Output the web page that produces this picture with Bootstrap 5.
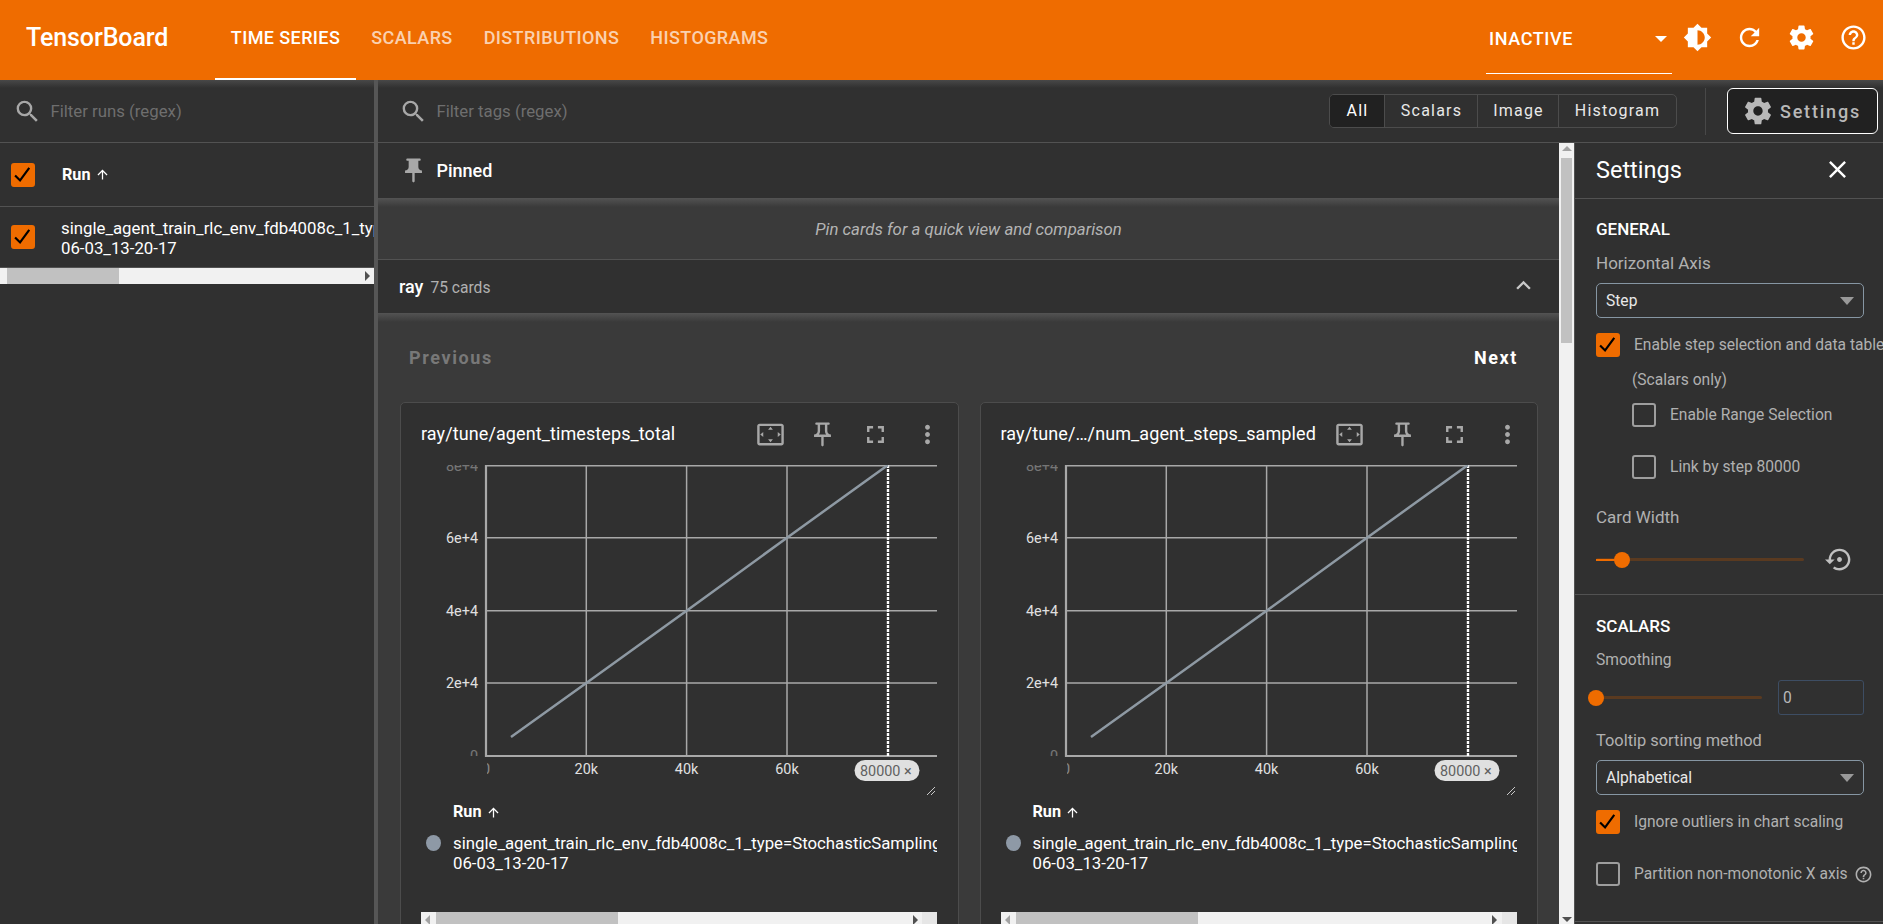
<!DOCTYPE html>
<html lang="en">
<head>
<meta charset="utf-8">
<title>TensorBoard</title>
<link href="https://cdn.jsdelivr.net/npm/bootstrap@5.3.0/dist/css/bootstrap.min.css" rel="stylesheet">
<style>
html,body{height:924px;overflow:hidden;background:#303030;font-family:Roboto,"Liberation Sans",sans-serif;color:#fff;font-size:16.8px;line-height:20px}
svg.ico{fill:currentColor;display:block;flex:none}
.tb-head{height:80px;background:#ef6c00;padding:0;flex-wrap:nowrap;align-items:stretch}
.tb-brand{font-size:25px;font-weight:500;color:#fff;margin:0 47px 0 26px;padding:0;line-height:76px;letter-spacing:-.1px}
.tb-tab.nav-link{height:80px;padding:0 15.5px;line-height:76px;font-weight:500;font-size:18px;color:rgba(255,255,255,.7);letter-spacing:.4px;border-bottom:2px solid transparent}
.tb-tab.nav-link.active{color:#fff;border-bottom-color:#fff}
.tb-inactive{width:186px;height:74px;margin-right:-1px;border-bottom:1px solid #fff;padding:0 5px 0 3px;line-height:78px;font-weight:500;font-size:18px;letter-spacing:.6px}
.tb-caret{width:0;height:0;border-left:6px solid transparent;border-right:6px solid transparent;border-top:6px solid #fff;margin-top:36px}
.tb-act{width:52px;height:80px;padding-bottom:6px;color:#fff}
.tb-actions{margin-right:4px}
.tb-body{height:844px}
.tb-side{width:378px;flex:none;border-right:4px solid #565656}
.tb-filter{height:63px;flex:none;border-bottom:1px solid #525252;background:linear-gradient(#484848,#303030 8px)}
.tb-ph{color:#6e6e6e;white-space:nowrap}
.tb-ico-g{color:#a8a8a8}
.tb-runhead{height:64px;border-bottom:1px solid #525252;padding-left:11px}
.tb-runrow{height:61px;padding-left:11px;border-bottom:1px solid #525252;overflow:hidden;white-space:nowrap;font-size:16.8px}
.form-check-input.tb-cb{width:24px;height:24px;margin:0;flex:none;background-color:transparent;border:2px solid #9e9e9e;border-radius:3px;box-shadow:none}
.form-check-input.tb-cb[type=checkbox]:checked{background-color:#ef6c00;border-color:#ef6c00;background-size:100%;background-image:url("data:image/svg+xml,%3Csvg xmlns='http://www.w3.org/2000/svg' viewBox='0 0 24 24'%3E%3Cpath fill='none' stroke='%23000' stroke-width='2.6' d='M2.5 12.5l6 6L19.5 3.5'/%3E%3C/svg%3E")}
.tb-hbar{height:16px;background:#f1f1f1;position:relative;flex:none}
.tb-hthumb{background:#c1c1c1;height:100%}
.tb-arr-r,.tb-arr-l{width:0;height:0;border-top:5px solid transparent;border-bottom:5px solid transparent;flex:none}
.tb-arr-r{border-left:5px solid #505050}
.tb-arr-l{border-right:5px solid #a3a3a3}
.tb-main{min-width:0}
.tb-tog.btn-group{height:34px;border:1px solid #4c4c4c;border-radius:5px;overflow:hidden}
.tb-tog .btn{border:0;border-left:1px solid #4c4c4c;border-radius:0;background:transparent;color:#e8e8e8;padding:0;font-size:16px;letter-spacing:1.2px;line-height:32px;flex:none}
.tb-tog .btn:first-child{border-left:0;background:#212121;color:#fff}
.tb-vr{width:1px;height:47px;background:#484848;margin:0 21px 0 28px}
.tb-setbtn.btn{width:151px;height:46px;background:#212121;border:1px solid #fff;border-radius:6px;color:#b8b8b8;font-weight:500;font-size:18px;letter-spacing:1.8px;padding:0 2px 0 0;margin-right:5px}
.tb-setgap{gap:6px}
.tb-pinned{height:56px;border-bottom:1px solid #525252;padding-left:24px;font-weight:500;font-size:18px}
.tb-hint{height:61px;border-bottom:1px solid #525252;background:linear-gradient(#505050,#3a3a3a 8px);font-style:italic;color:#b4b4b4;font-size:16.8px}
.tb-group{height:54px;border-bottom:1px solid #525252;padding:0 21px 0 21px}
.tb-group75{color:#b0b0b0;font-size:15.6px;margin:2px 0 0 7px}
.tb-area{background:linear-gradient(#505050,#3a3a3a 8px)}
.tb-pager{height:88px;padding:0 41px 0 31px;font-weight:700;font-size:18px;letter-spacing:1.6px}
.tb-grid{display:grid;grid-template-columns:1fr 1fr;gap:21px;padding:0 21px 0 22px}
.tb-pcard{height:560px;background:#303030;border:1px solid #4c4c4c;border-radius:5px;padding:0 21px 0 20px;overflow:hidden}
.tb-chead{height:62px;white-space:nowrap;font-size:18px;letter-spacing:.1px}
.tb-cicons{width:187px;margin-left:auto;margin-right:-6px}
.tb-chart{display:block;width:516px;height:330px}
.tb-chart text{font-family:Roboto,"Liberation Sans",sans-serif;font-size:14.4px;fill:#e0e0e0}
.tb-dt{width:516px;overflow:hidden;font-size:16.8px}
.tb-runlbl{margin:7px 0 11px 32px;font-weight:700;font-size:16.2px}
.tb-dot{width:15px;height:16px;border-radius:50%;background:#8e99a6;margin:2px 12px 0 5px;flex:none}
.tb-vtext{white-space:nowrap}
.tb-cbar{margin-top:39px;height:16px;width:516px}
.tb-corner{width:15px;height:100%;background:#e6e6e6;flex:none}
.tb-vbar{width:15px;flex:none;background:#f1f1f1;padding:3px 2px 0}
.tb-arr-u{width:0;height:0;border-left:5px solid transparent;border-right:5px solid transparent;border-bottom:5px solid #a3a3a3;margin:0 auto}
.tb-arr-d{width:0;height:0;border-left:5px solid transparent;border-right:5px solid transparent;border-top:5px solid #505050;margin:0 auto 2px}
.tb-vthumb{width:11px;height:185px;background:#c1c1c1;margin-top:7px}
.tb-panel{width:309px;flex:none;border-left:1px solid #525252;overflow:hidden;white-space:nowrap;color:#b0b0b0;font-size:15.6px}
.tb-ptitle{height:56px;border-bottom:1px solid #525252;padding:0 31px 2px 21px;color:#fff;font-size:23.5px}
.tb-sect{border-bottom:1px solid #525252;padding:0 0 0 21px}
.tb-h6{color:#fff;font-weight:500;font-size:17px;line-height:20px}
.tb-big{font-size:17px}
.form-select.tb-sel{width:268px;height:35px;background-color:transparent;border:1px solid #8696a3;border-radius:5px;color:#e8e8e8;font-size:15.6px;padding:2px 0 0 9px;box-shadow:none;background-size:16px 8px;background-position:right 8px center;background-image:url("data:image/svg+xml,%3Csvg xmlns='http://www.w3.org/2000/svg' viewBox='0 0 16 8'%3E%3Cpath fill='%23999' d='M1 0h14L8 8z'/%3E%3C/svg%3E")}
.form-control.tb-num{width:86px;height:35px;background:transparent;border:1px solid #3d4d63;border-radius:3px;color:#b8b8b8;padding:0 0 0 4px;font-size:15.6px;box-shadow:none}
.tb-track{height:20px;position:relative}
.tb-rail{position:absolute;left:0;right:0;top:8.5px;height:3px;background:#5a3a20;border-radius:2px}
.tb-fill{position:absolute;left:0;top:9px;height:2px;background:#ef6c00}
.tb-thumb{position:absolute;top:2px;width:16px;height:16px;border-radius:50%;background:#ef6c00}
.tb-lab{margin-left:14px;line-height:20px}
</style>
</head>
<body>
<svg width="0" height="0" class="position-absolute">
<symbol id="i-search" viewBox="0 0 24 24"><path d="M15.5 14h-.79l-.28-.27A6.471 6.471 0 0 0 16 9.5 6.5 6.5 0 1 0 9.5 16c1.61 0 3.09-.59 4.23-1.57l.27.28v.79l5 4.99L20.49 19l-4.99-5zm-6 0C7.01 14 5 11.99 5 9.5S7.01 5 9.5 5 14 7.01 14 9.5 11.99 14 9.5 14z"/></symbol>
<symbol id="i-bright" viewBox="0 0 24 24"><path d="M20 15.31L23.31 12 20 8.69V4h-4.69L12 .69 8.69 4H4v4.69L.69 12 4 15.31V20h4.69L12 23.31 15.31 20H20v-4.69zM12 18V6c3.31 0 6 2.69 6 6s-2.69 6-6 6z"/></symbol>
<symbol id="i-refresh" viewBox="0 0 24 24"><path d="M17.65 6.35C16.2 4.9 14.21 4 12 4c-4.42 0-7.99 3.58-7.99 8s3.57 8 7.99 8c3.73 0 6.84-2.55 7.73-6h-2.08c-.82 2.33-3.04 4-5.65 4-3.31 0-6-2.69-6-6s2.69-6 6-6c1.66 0 3.14.69 4.22 1.78L13 11h7V4l-2.35 2.35z"/></symbol>
<symbol id="i-gear" viewBox="0 0 24 24"><path d="M19.43 12.98c.04-.32.07-.64.07-.98s-.03-.66-.07-.98l2.11-1.65c.19-.15.24-.42.12-.64l-2-3.46c-.12-.22-.39-.3-.61-.22l-2.49 1c-.52-.4-1.08-.73-1.69-.98l-.38-2.65C14.46 2.18 14.25 2 14 2h-4c-.25 0-.46.18-.49.42l-.38 2.65c-.61.25-1.17.59-1.69.98l-2.49-1c-.23-.09-.49 0-.61.22l-2 3.46c-.13.22-.07.49.12.64l2.11 1.65c-.04.32-.07.65-.07.98s.03.66.07.98l-2.11 1.65c-.19.15-.24.42-.12.64l2 3.46c.12.22.39.3.61.22l2.49-1c.52.4 1.08.73 1.69.98l.38 2.65c.03.24.24.42.49.42h4c.25 0 .46-.18.49-.42l.38-2.65c.61-.25 1.17-.59 1.69-.98l2.49 1c.23.09.49 0 .61-.22l2-3.46c.12-.22.07-.49-.12-.64l-2.11-1.65zM12 15.5c-1.93 0-3.5-1.57-3.5-3.5s1.57-3.5 3.5-3.5 3.5 1.57 3.5 3.5-1.57 3.5-3.5 3.5z"/></symbol>
<symbol id="i-help" viewBox="0 0 24 24"><path d="M11 18h2v-2h-2v2zm1-16C6.48 2 2 6.48 2 12s4.48 10 10 10 10-4.48 10-10S17.52 2 12 2zm0 18c-4.41 0-8-3.59-8-8s3.59-8 8-8 8 3.59 8 8-3.59 8-8 8zm0-14c-2.21 0-4 1.79-4 4h2c0-1.1.9-2 2-2s2 .9 2 2c0 2-3 1.75-3 5h2c0-2.25 3-2.5 3-5 0-2.21-1.79-4-4-4z"/></symbol>
<symbol id="i-pinf" viewBox="0 0 24 24"><path d="M16 9V4h1c.55 0 1-.45 1-1s-.45-1-1-1H7c-.55 0-1 .45-1 1s.45 1 1 1h1v5c0 1.66-1.34 3-3 3v2h5.97v7l1 1 1-1v-7H19v-2c-1.66 0-3-1.34-3-3z"/></symbol>
<symbol id="i-pino" viewBox="0 0 24 24"><path d="M14 4v5c0 1.12.37 2.16 1 3H9c.65-.86 1-1.9 1-3V4h4m3-2H7c-.55 0-1 .45-1 1s.45 1 1 1h1v5c0 1.66-1.34 3-3 3v2h5.97v7l1 1 1-1v-7H19v-2c-1.66 0-3-1.34-3-3V4h1c.55 0 1-.45 1-1s-.45-1-1-1z"/></symbol>
<symbol id="i-full" viewBox="0 0 24 24"><path d="M7 14H5v5h5v-2H7v-3zm-2-4h2V7h3V5H5v5zm12 7h-3v2h5v-5h-2v3zM14 5v2h3v3h2V5h-5z"/></symbol>
<symbol id="i-more" viewBox="0 0 24 24"><path d="M12 8c1.1 0 2-.9 2-2s-.9-2-2-2-2 .9-2 2 .9 2 2 2zm0 2c-1.1 0-2 .9-2 2s.9 2 2 2 2-.9 2-2-.9-2-2-2zm0 6c-1.1 0-2 .9-2 2s.9 2 2 2 2-.9 2-2-.9-2-2-2z"/></symbol>
<symbol id="i-fit" viewBox="0 0 24 24"><path d="M12.01 5.5L10 8h4l-1.99-2.5zM18 10v4l2.5-1.99L18 10zM6 10l-2.5 2.01L6 14v-4zm8 6h-4l2.01 2.5L14 16zm7-13H3c-1.1 0-2 .9-2 2v14c0 1.1.9 2 2 2h18c1.1 0 2-.9 2-2V5c0-1.1-.9-2-2-2zm0 16.01H3V4.99h18v14.02z"/></symbol>
<symbol id="i-close" viewBox="0 0 24 24"><path d="M19 6.41L17.59 5 12 10.59 6.41 5 5 6.41 10.59 12 5 17.59 6.41 19 12 13.41 17.59 19 19 17.59 13.41 12z"/></symbol>
<symbol id="i-less" viewBox="0 0 24 24"><path d="M12 8l-6 6 1.41 1.41L12 10.83l4.59 4.58L18 14z"/></symbol>
<symbol id="i-reset" viewBox="0 0 24 24"><path d="M14 12c0-1.1-.9-2-2-2s-2 .9-2 2 .9 2 2 2 2-.9 2-2zm-2-9c-4.97 0-9 4.03-9 9H0l4 4 4-4H5c0-3.87 3.13-7 7-7s7 3.13 7 7-3.13 7-7 7c-1.51 0-2.91-.49-4.06-1.3l-1.42 1.44C8.04 20.3 9.94 21 12 21c4.97 0 9-4.03 9-9s-4.03-9-9-9z"/></symbol>
<symbol id="i-up" viewBox="0 0 24 24"><path d="M4 12l1.41 1.41L11 7.83V20h2V7.83l5.58 5.59L20 12l-8-8-8 8z"/></symbol>
<clipPath id="clip-y"><rect x="0" y="0" width="64" height="291"/></clipPath>
<clipPath id="clip-x"><rect x="66" y="292" width="40" height="30"/></clipPath>
</svg>

<nav class="navbar tb-head">
  <span class="navbar-brand tb-brand">TensorBoard</span>
  <ul class="nav flex-nowrap">
    <li class="nav-item"><a class="nav-link tb-tab active" href="#">TIME SERIES</a></li>
    <li class="nav-item"><a class="nav-link tb-tab" href="#">SCALARS</a></li>
    <li class="nav-item"><a class="nav-link tb-tab" href="#">DISTRIBUTIONS</a></li>
    <li class="nav-item"><a class="nav-link tb-tab" href="#">HISTOGRAMS</a></li>
  </ul>
  <div class="d-flex ms-auto tb-actions">
    <div class="tb-inactive d-flex justify-content-between"><span>INACTIVE</span><span class="tb-caret"></span></div>
    <div class="tb-act d-flex align-items-center justify-content-center"><svg class="ico" width="29" height="29"><use href="#i-bright"/></svg></div>
    <div class="tb-act d-flex align-items-center justify-content-center"><svg class="ico" width="29" height="29"><use href="#i-refresh"/></svg></div>
    <div class="tb-act d-flex align-items-center justify-content-center"><svg class="ico" width="29" height="29"><use href="#i-gear"/></svg></div>
    <div class="tb-act d-flex align-items-center justify-content-center"><svg class="ico" width="29" height="29"><use href="#i-help"/></svg></div>
  </div>
</nav>

<div class="tb-body d-flex">
  <aside class="tb-side d-flex flex-column">
    <div class="tb-filter d-flex align-items-center gap-2" style="padding-left:13px"><svg class="ico tb-ico-g" width="29" height="29"><use href="#i-search"/></svg><span class="tb-ph">Filter runs (regex)</span></div>
    <div class="tb-runhead d-flex align-items-center"><input class="form-check-input tb-cb" type="checkbox" checked><b class="d-flex align-items-center" style="font-size:16.2px;margin-left:27px">Run <svg class="ico ms-1" width="15" height="15"><use href="#i-up"/></svg></b></div>
    <div class="tb-runrow d-flex align-items-center"><input class="form-check-input tb-cb" type="checkbox" checked><div class="tb-vtext" style="margin:2px 0 0 26px">single_agent_train_rlc_env_fdb4008c_1_type=StochasticSampling<br>06-03_13-20-17</div></div>
    <div class="tb-hbar d-flex align-items-center"><div class="tb-hthumb" style="width:112px;margin-left:7px"></div><span class="tb-arr-r ms-auto me-1"></span></div>
  </aside>

  <div class="tb-main flex-grow-1 d-flex flex-column">
    <div class="tb-filter d-flex align-items-center">
      <div class="d-flex align-items-center gap-2 flex-grow-1" style="padding-left:21px"><svg class="ico tb-ico-g" width="29" height="29"><use href="#i-search"/></svg><span class="tb-ph">Filter tags (regex)</span></div>
      <div class="btn-group tb-tog"><button class="btn" style="width:55px">All</button><button class="btn" style="width:94px">Scalars</button><button class="btn" style="width:82px">Image</button><button class="btn" style="width:118px">Histogram</button></div>
      <div class="tb-vr"></div>
      <button class="btn tb-setbtn d-flex align-items-center justify-content-center tb-setgap"><svg class="ico" width="32" height="32"><use href="#i-gear"/></svg>Settings</button>
    </div>
    <div class="d-flex flex-grow-1" style="min-height:0">
      <div class="flex-grow-1" style="min-width:0;overflow:hidden">
        <div class="tb-pinned d-flex align-items-center"><svg class="ico tb-ico-g me-2" style="margin-left:-3px" width="29" height="29"><use href="#i-pinf"/></svg><span>Pinned</span></div>
        <div class="tb-hint d-flex align-items-center justify-content-center">Pin cards for a quick view and comparison</div>
        <div class="tb-group d-flex align-items-center"><span style="font-weight:500;font-size:18px">ray</span><span class="tb-group75">75 cards</span><svg class="ico ms-auto" style="color:#c8c8c8;margin-bottom:2px" width="29" height="29"><use href="#i-less"/></svg></div>
        <div class="tb-area">
          <div class="tb-pager d-flex align-items-center justify-content-between"><span style="color:#787878">Previous</span><span>Next</span></div>
          <div class="tb-grid">

            <div class="tb-pcard">
              <div class="tb-chead d-flex align-items-center"><span>ray/tune/agent_timesteps_total</span>
                <div class="tb-cicons d-flex justify-content-between tb-ico-g align-items-center"><svg class="ico" width="29" height="29"><use href="#i-fit"/></svg><svg class="ico" width="29" height="29"><use href="#i-pino"/></svg><svg class="ico" width="29" height="29"><use href="#i-full"/></svg><svg class="ico" width="29" height="29"><use href="#i-more"/></svg></div>
              </div>
              <svg class="tb-chart" viewBox="0 0 516 330">
                <g stroke="#a8a8a8" stroke-width="1.5"><path d="M65 72.7H516M65 145.7H516M65 218H516M65 .75H516" fill="none"/><path d="M165.3 0V291M265.6 0V291M366 0V291"/></g>
                <path d="M65 0V292M65 291H516" stroke="#a8a8a8" stroke-width="2.2" fill="none"/>
                <path d="M467 0V291" stroke="#fff" stroke-width="2.4" stroke-dasharray="3 1"/>
                <path d="M90 272L165.3 218 265.6 145.7 366 72.7 467 0" stroke="#8e99a3" stroke-width="2.5" fill="none"/>
                <text x="57" y="6" text-anchor="end" opacity=".4" clip-path="url(#clip-y)">8e+4</text>
                <text x="57" y="78" text-anchor="end">6e+4</text><text x="57" y="151" text-anchor="end">4e+4</text><text x="57" y="223" text-anchor="end">2e+4</text>
                <text x="57" y="296" text-anchor="end" opacity=".4" clip-path="url(#clip-y)">0</text>
                <text x="65" y="309" text-anchor="middle" opacity=".5" clip-path="url(#clip-x)">0</text>
                <text x="165.3" y="309" text-anchor="middle">20k</text><text x="265.6" y="309" text-anchor="middle">40k</text><text x="366" y="309" text-anchor="middle">60k</text>
                <rect x="433.5" y="295" width="65" height="21" rx="10.5" fill="#e0e0e0"/>
                <text x="439" y="310.5" style="fill:#616161">80000 ×</text>
                <path d="M506 330l8-8M510 330l4-4" stroke="#c8c8c8" stroke-width="1"/>
              </svg>
              <div class="tb-dt">
                <div class="tb-runlbl d-flex align-items-center">Run <svg class="ico ms-1" width="15" height="15"><use href="#i-up"/></svg></div>
                <div class="d-flex"><span class="tb-dot"></span><div class="tb-vtext">single_agent_train_rlc_env_fdb4008c_1_type=StochasticSampling<br>06-03_13-20-17</div></div>
                <div class="tb-hbar tb-cbar d-flex align-items-center"><span class="tb-arr-l ms-1"></span><div class="tb-hthumb" style="width:182px;margin-left:6px"></div><span class="tb-arr-r ms-auto me-1"></span><span class="tb-corner"></span></div>
              </div>
            </div>

            <div class="tb-pcard">
              <div class="tb-chead d-flex align-items-center"><span>ray/tune/…/num_agent_steps_sampled</span>
                <div class="tb-cicons d-flex justify-content-between tb-ico-g align-items-center"><svg class="ico" width="29" height="29"><use href="#i-fit"/></svg><svg class="ico" width="29" height="29"><use href="#i-pino"/></svg><svg class="ico" width="29" height="29"><use href="#i-full"/></svg><svg class="ico" width="29" height="29"><use href="#i-more"/></svg></div>
              </div>
              <svg class="tb-chart" viewBox="0 0 516 330">
                <g stroke="#a8a8a8" stroke-width="1.5"><path d="M65 72.7H516M65 145.7H516M65 218H516M65 .75H516" fill="none"/><path d="M165.3 0V291M265.6 0V291M366 0V291"/></g>
                <path d="M65 0V292M65 291H516" stroke="#a8a8a8" stroke-width="2.2" fill="none"/>
                <path d="M467 0V291" stroke="#fff" stroke-width="2.4" stroke-dasharray="3 1"/>
                <path d="M90 272L165.3 218 265.6 145.7 366 72.7 467 0" stroke="#8e99a3" stroke-width="2.5" fill="none"/>
                <text x="57" y="6" text-anchor="end" opacity=".4" clip-path="url(#clip-y)">8e+4</text>
                <text x="57" y="78" text-anchor="end">6e+4</text><text x="57" y="151" text-anchor="end">4e+4</text><text x="57" y="223" text-anchor="end">2e+4</text>
                <text x="57" y="296" text-anchor="end" opacity=".4" clip-path="url(#clip-y)">0</text>
                <text x="65" y="309" text-anchor="middle" opacity=".5" clip-path="url(#clip-x)">0</text>
                <text x="165.3" y="309" text-anchor="middle">20k</text><text x="265.6" y="309" text-anchor="middle">40k</text><text x="366" y="309" text-anchor="middle">60k</text>
                <rect x="433.5" y="295" width="65" height="21" rx="10.5" fill="#e0e0e0"/>
                <text x="439" y="310.5" style="fill:#616161">80000 ×</text>
                <path d="M506 330l8-8M510 330l4-4" stroke="#c8c8c8" stroke-width="1"/>
              </svg>
              <div class="tb-dt">
                <div class="tb-runlbl d-flex align-items-center">Run <svg class="ico ms-1" width="15" height="15"><use href="#i-up"/></svg></div>
                <div class="d-flex"><span class="tb-dot"></span><div class="tb-vtext">single_agent_train_rlc_env_fdb4008c_1_type=StochasticSampling<br>06-03_13-20-17</div></div>
                <div class="tb-hbar tb-cbar d-flex align-items-center"><span class="tb-arr-l ms-1"></span><div class="tb-hthumb" style="width:182px;margin-left:6px"></div><span class="tb-arr-r ms-auto me-1"></span><span class="tb-corner"></span></div>
              </div>
            </div>

          </div>
        </div>
      </div>

      <div class="tb-vbar d-flex flex-column"><span class="tb-arr-u"></span><div class="tb-vthumb"></div><span class="tb-arr-d mt-auto"></span></div>

      <div class="tb-panel">
        <div class="tb-ptitle d-flex align-items-center justify-content-between"><span>Settings</span><svg class="ico" width="29" height="29"><use href="#i-close"/></svg></div>
        <div class="tb-sect" style="height:396px;padding-top:20px">
          <div class="tb-h6">GENERAL</div>
          <div class="tb-big" style="margin-top:14px">Horizontal Axis</div>
          <select class="form-select tb-sel" style="margin-top:10px"><option>Step</option></select>
          <div class="d-flex align-items-center" style="margin-top:15px"><input class="form-check-input tb-cb" type="checkbox" checked><span class="tb-lab">Enable step selection and data table</span></div>
          <div style="margin:13px 0 -1px 36px">(Scalars only)</div>
          <div class="d-flex align-items-center" style="margin:14px 0 0 36px"><input class="form-check-input tb-cb" type="checkbox"><span class="tb-lab">Enable Range Selection</span></div>
          <div class="d-flex align-items-center" style="margin:28px 0 0 36px"><input class="form-check-input tb-cb" type="checkbox"><span class="tb-lab">Link by step 80000</span></div>
          <div class="tb-big" style="margin-top:28px">Card Width</div>
          <div class="d-flex align-items-center" style="margin-top:18px">
            <div class="tb-track" style="width:208px"><div class="tb-rail"></div><div class="tb-fill" style="width:25px"></div><div class="tb-thumb" style="left:18px"></div></div>
            <svg class="ico ms-auto" style="margin-right:29px;color:#c0c0c0" width="29" height="29"><use href="#i-reset"/></svg>
          </div>
        </div>
        <div class="tb-sect" style="height:327px;padding-top:21px">
          <div class="tb-h6">SCALARS</div>
          <div style="margin:14px 0 -1px">Smoothing</div>
          <div class="d-flex align-items-center" style="margin-top:11px;width:268px">
            <div class="tb-track" style="width:166px"><div class="tb-rail"></div><div class="tb-thumb" style="left:-8px"></div></div>
            <input class="form-control tb-num ms-auto" type="text" value="0">
          </div>
          <div style="margin:16px 0 -1px;font-size:16.4px">Tooltip sorting method</div>
          <select class="form-select tb-sel" style="margin-top:10px"><option>Alphabetical</option></select>
          <div class="d-flex align-items-center" style="margin-top:15px"><input class="form-check-input tb-cb" type="checkbox" checked><span class="tb-lab">Ignore outliers in chart scaling</span></div>
          <div class="d-flex align-items-center" style="margin-top:28px"><input class="form-check-input tb-cb" type="checkbox"><span class="tb-lab">Partition non-monotonic X axis</span><svg class="ico" style="color:#b0b0b0;margin-left:6px" width="19" height="19"><use href="#i-help"/></svg></div>
        </div>
      </div>
    </div>
  </div>
</div>
<script src="https://cdn.jsdelivr.net/npm/bootstrap@5.3.0/dist/js/bootstrap.bundle.min.js"></script>
</body>
</html>
